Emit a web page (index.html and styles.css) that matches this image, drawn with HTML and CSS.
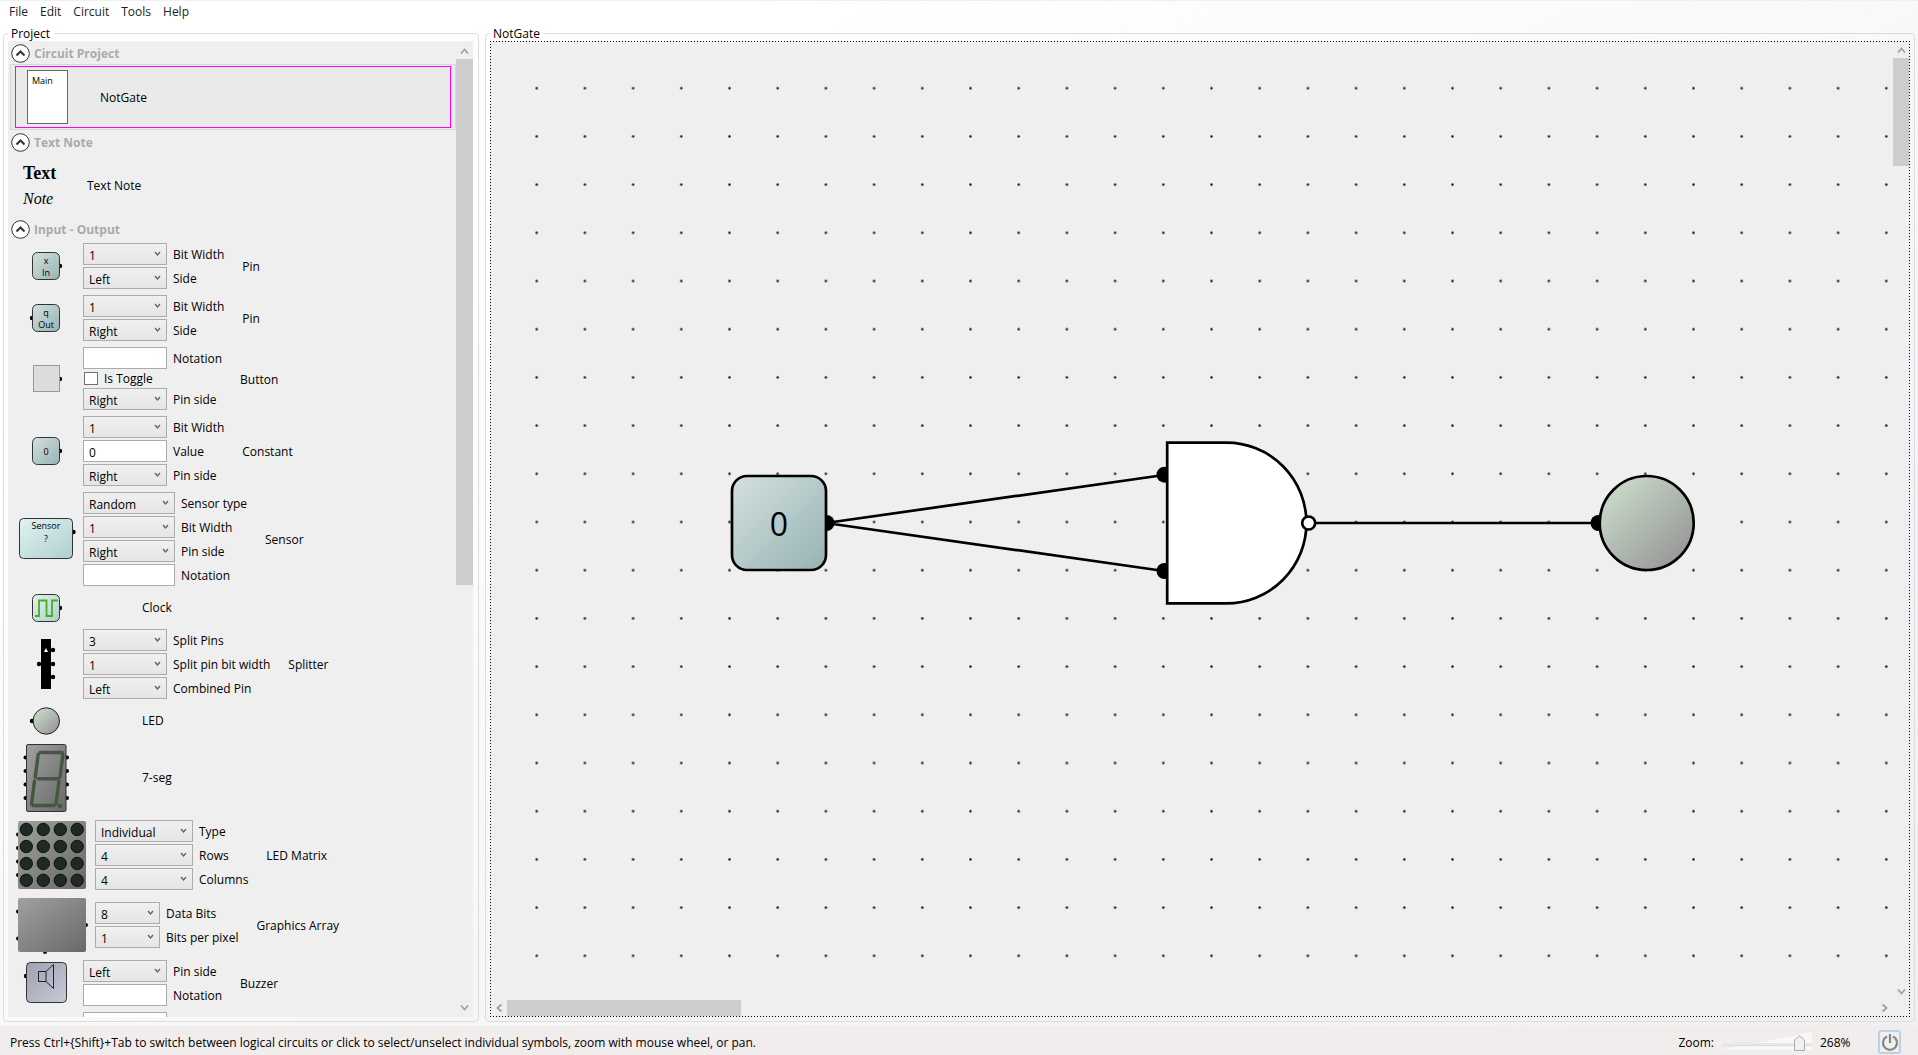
FILE: index.html
```html
<!DOCTYPE html>
<html lang="en">
<head>
<meta charset="utf-8">
<title>NotGate</title>
<link rel="stylesheet" href="styles.css">
</head>
<body>
<svg class="defs" width="0" height="0" aria-hidden="true">
  <defs>
    <linearGradient id="teal" x1="0" y1="0" x2="1" y2="1"><stop offset="0" stop-color="#d3e0de"/><stop offset="1" stop-color="#97b3b4"/></linearGradient>
    <linearGradient id="aqua" x1="0" y1="0" x2="1" y2="1"><stop offset="0" stop-color="#e2f2f1"/><stop offset="1" stop-color="#aecfcf"/></linearGradient>
    <linearGradient id="led" x1="0" y1="0" x2="1" y2="1"><stop offset="0.1" stop-color="#cadbca"/><stop offset="0.9" stop-color="#969696"/></linearGradient>
    <linearGradient id="gray" x1="0" y1="0" x2="1" y2="1"><stop offset="0" stop-color="#a0a0a0"/><stop offset="1" stop-color="#696969"/></linearGradient>
    <linearGradient id="violet" x1="0" y1="0" x2="1" y2="1"><stop offset="0" stop-color="#9f9fb0"/><stop offset="1" stop-color="#c9cbd8"/></linearGradient>
    <pattern id="grid" x="21.6" y="22.1" width="48.2" height="48.2" patternUnits="userSpaceOnUse"><circle cx="24.1" cy="24.1" r="1.2" fill="#111"/></pattern>
    <path id="chevron" d="M-4 2.5 0 -1.5 4 2.5" fill="none" stroke="#333" stroke-width="2"/>
    <path id="arrow" d="M-3.500 2.500 0 -1.500 3.500 2.500" fill="none" stroke="#a0a0a0" stroke-width="1.800"/>
  </defs>
</svg>

<nav class="menu">
  <button type="button">File</button>
  <button type="button">Edit</button>
  <button type="button">Circuit</button>
  <button type="button">Tools</button>
  <button type="button">Help</button>
</nav>

<main class="work">
  <fieldset class="group project">
    <legend>Project</legend>
    <div class="list">
      <section class="set">
        <h2><button type="button" aria-label="Collapse Circuit Project"><svg width="19" height="19"><circle cx="9.5" cy="9.5" r="8.8" fill="#fff" stroke="#333"/><use href="#chevron" x="9.5" y="9"/></svg></button>Circuit Project</h2>
        <div class="current"><div class="current-frame">
          <div class="sheet">Main</div>
          <span class="caption">NotGate</span>
        </div></div>
      </section>

      <section class="set">
        <h2><button type="button" aria-label="Collapse Text Note"><svg width="19" height="19"><circle cx="9.5" cy="9.5" r="8.8" fill="#fff" stroke="#333"/><use href="#chevron" x="9.5" y="9"/></svg></button>Text Note</h2>
        <div class="item note">
          <div class="sample"><b>Text</b><i>Note</i></div>
          <span class="caption">Text Note</span>
        </div>
      </section>

      <section class="set">
        <h2><button type="button" aria-label="Collapse Input - Output"><svg width="19" height="19"><circle cx="9.5" cy="9.5" r="8.8" fill="#fff" stroke="#333"/><use href="#chevron" x="9.5" y="9"/></svg></button>Input - Output</h2>

        <div class="item">
          <svg class="icon" width="73" height="28"><circle cx="50" cy="14" r="2.2"/><rect x="22.5" y=".5" width="27" height="27" rx="5" fill="url(#teal)" stroke="#333"/><text x="36" y="12">x</text><text x="36" y="24">In</text></svg>
          <div class="fields">
            <label><select><option>1</option></select>Bit Width</label>
            <label><select><option>Left</option></select>Side</label>
          </div>
          <span class="name">Pin</span>
        </div>

        <div class="item">
          <svg class="icon" width="73" height="28"><circle cx="22" cy="14" r="2.2"/><rect x="22.5" y=".5" width="27" height="27" rx="5" fill="url(#teal)" stroke="#333"/><text x="36" y="12">q</text><text x="36" y="24">Out</text></svg>
          <div class="fields">
            <label><select><option>1</option></select>Bit Width</label>
            <label><select><option>Right</option></select>Side</label>
          </div>
          <span class="name">Pin</span>
        </div>

        <div class="item">
          <svg class="icon" width="73" height="28"><circle cx="50" cy="14" r="2.2"/><rect x="23.5" y=".5" width="26" height="26" fill="#dcdcdc" stroke="#999"/></svg>
          <div class="fields toggle">
            <label><input type="text">Notation</label>
            <label class="check"><input type="checkbox">Is Toggle</label>
            <label><select><option>Right</option></select>Pin side</label>
          </div>
          <span class="name">Button</span>
        </div>

        <div class="item">
          <svg class="icon" width="73" height="28"><circle cx="50" cy="14" r="2.2"/><rect x="22.5" y=".5" width="27" height="27" rx="5" fill="url(#teal)" stroke="#333"/><text x="36" y="18">0</text></svg>
          <div class="fields">
            <label><select><option>1</option></select>Bit Width</label>
            <label><input type="text" value="0">Value</label>
            <label><select><option>Right</option></select>Pin side</label>
          </div>
          <span class="name">Constant</span>
        </div>

        <div class="item">
          <svg class="icon" width="73" height="42"><circle cx="63.5" cy="14" r="2.2"/><rect x="9.5" y=".5" width="53" height="40" rx="4" fill="url(#aqua)" stroke="#333"/><text x="36" y="11">Sensor</text><text x="36" y="24">?</text></svg>
          <div class="fields wide">
            <label><select><option>Random</option></select>Sensor type</label>
            <label><select><option>1</option></select>Bit Width</label>
            <label><select><option>Right</option></select>Pin side</label>
            <label><input type="text">Notation</label>
          </div>
          <span class="name">Sensor</span>
        </div>

        <div class="item plain">
          <svg class="icon" width="73" height="28"><circle cx="50" cy="14" r="2.2"/><rect x="22.5" y=".5" width="27" height="27" rx="5" fill="url(#aqua)" stroke="#333"/><path d="M25 22h4V6.500h7.500V22h5.500V6.500h6" fill="none" stroke="#4dac1c" stroke-width="1.800"/></svg>
          <span>Clock</span>
        </div>

        <div class="item">
          <svg class="icon" width="73" height="50"><rect x="31" width="10" height="50"/><circle cx="43" cy="11" r="2.200"/><circle cx="43" cy="25" r="2.200"/><circle cx="43" cy="38" r="2.200"/><circle cx="29" cy="25" r="2.200"/><path d="M36 9l2 4h-4z" fill="#fff"/></svg>
          <div class="fields">
            <label><select><option>3</option></select>Split Pins</label>
            <label><select><option>1</option></select>Split pin bit width</label>
            <label><select><option>Left</option></select>Combined Pin</label>
          </div>
          <span class="name">Splitter</span>
        </div>

        <div class="item plain">
          <svg class="icon" width="73" height="28"><circle cx="22" cy="14" r="2.200"/><circle cx="36.300" cy="14" r="13.200" fill="url(#led)" stroke="#222"/></svg>
          <span>LED</span>
        </div>

        <div class="item plain tall">
          <svg class="icon" width="73" height="68">
            <g><circle cx="15.500" cy="13.500" r="2"/><circle cx="15.500" cy="27" r="2"/><circle cx="15.500" cy="40.500" r="2"/><circle cx="15.500" cy="54" r="2"/><circle cx="57" cy="13.500" r="2"/><circle cx="57" cy="27" r="2"/><circle cx="57" cy="40.500" r="2"/><circle cx="57" cy="54" r="2"/></g>
            <rect x="16.500" y=".5" width="39.500" height="67" rx="1.500" fill="url(#gray)" stroke="#333"/>
            <path d="M30 8.500h22M28.200 10.500 25.200 33M53 10.500 50 33M28 34.800h20M24.500 37 21.500 60M49 37 46 60M23 61.500h21" stroke="#43583f" stroke-width="3.400" stroke-linecap="round"/><circle cx="50" cy="62" r="2.300" fill="#43583f"/>
          </svg>
          <span>7-seg</span>
        </div>

        <div class="item">
          <svg class="icon" width="85" height="68">
            <g><circle cx="8" cy="13.500" r="2"/><circle cx="8" cy="27" r="2"/><circle cx="8" cy="40.500" r="2"/><circle cx="8" cy="54" r="2"/></g>
            <rect x="8" width="68" height="68" rx="2" fill="url(#gray)"/>
            <g fill="#1f2b1f" stroke="#111"><circle cx="16.300" cy="8.500" r="6.200"/><circle cx="33.300" cy="8.500" r="6.200"/><circle cx="50.300" cy="8.500" r="6.200"/><circle cx="67.200" cy="8.500" r="6.200"/><circle cx="16.300" cy="25.500" r="6.200"/><circle cx="33.300" cy="25.500" r="6.200"/><circle cx="50.300" cy="25.500" r="6.200"/><circle cx="67.200" cy="25.500" r="6.200"/><circle cx="16.300" cy="42.500" r="6.200"/><circle cx="33.300" cy="42.500" r="6.200"/><circle cx="50.300" cy="42.500" r="6.200"/><circle cx="67.200" cy="42.500" r="6.200"/><circle cx="16.300" cy="59.300" r="6.200"/><circle cx="33.300" cy="59.300" r="6.200"/><circle cx="50.300" cy="59.300" r="6.200"/><circle cx="67.200" cy="59.300" r="6.200"/></g>
          </svg>
          <div class="fields matrix">
            <label><select><option>Individual</option></select>Type</label>
            <label><select><option>4</option></select>Rows</label>
            <label><select><option>4</option></select>Columns</label>
          </div>
          <span class="name">LED Matrix</span>
        </div>

        <div class="item array">
          <svg class="icon" width="85" height="54"><circle cx="8" cy="13.500" r="2"/><circle cx="8" cy="40.500" r="2"/><circle cx="76" cy="27" r="2"/><circle cx="35" cy="54" r="2"/><rect x="8" width="68" height="54" rx="2" fill="url(#gray)"/></svg>
          <div class="fields small">
            <label><select><option>8</option></select>Data Bits</label>
            <label><select><option>1</option></select>Bits per pixel</label>
          </div>
          <span class="name">Graphics Array</span>
        </div>

        <div class="item">
          <svg class="icon" width="73" height="42"><circle cx="16" cy="14" r="2.200"/><rect x="16.500" y=".5" width="40" height="40" rx="4" fill="url(#violet)" stroke="#333"/><path d="M28.500 9.500h7.500v10h-7.500zM36 9.500l7.500-7v24l-7.500-7" fill="none" stroke="#222"/></svg>
          <div class="fields">
            <label><select><option>Left</option></select>Pin side</label>
            <label><input type="text">Notation</label>
          </div>
          <span class="name">Buzzer</span>
        </div>

        <div class="item">
          <svg class="icon" width="73" height="22"></svg>
          <div class="fields"><label><input type="text"></label></div>
        </div>
      </section>
    </div>
    <div class="vbar">
      <svg width="17" height="18"><use href="#arrow" x="8.500" y="10"/></svg>
      <div class="track"><div class="thumb"></div></div>
      <svg width="17" height="18"><use href="#arrow" transform="translate(8.500 9) scale(1 -1)"/></svg>
    </div>
  </fieldset>

  <fieldset class="group editor">
    <legend>NotGate</legend>
    <div class="diagram">
      <svg class="sheet-view" width="100%" height="100%">
        <rect width="100%" height="100%" fill="url(#grid)"/>
        <g stroke="#000" stroke-width="2.700">
          <path d="M335 481 673 433M335 481 673 529M817 481H1107" fill="none"/>
          <g stroke="none"><circle cx="335.500" cy="481" r="8"/><circle cx="673.500" cy="432.700" r="8"/><circle cx="673.500" cy="529" r="8"/><circle cx="1107.500" cy="481" r="8"/></g>
          <rect x="241" y="434" width="94" height="94" rx="15" fill="url(#teal)"/>
          <path d="M676.200 400.700H735.500A80 80.300 0 0 1 735.500 561.300H676.200Z" fill="#fff"/>
          <circle cx="817.700" cy="481" r="6.500" fill="#fff"/>
          <circle cx="1155.700" cy="481" r="47" fill="url(#led)"/>
        </g>
        <text class="value" x="288" y="494">0</text>
      </svg>
      <div class="vbar">
        <svg width="17" height="16"><use href="#arrow" x="8.500" y="8"/></svg>
        <div class="track"><div class="thumb"></div></div>
        <svg width="17" height="16"><use href="#arrow" transform="translate(8.500 8) scale(1 -1)"/></svg>
      </div>
      <div class="hbar">
        <svg width="16" height="16"><use href="#arrow" transform="translate(8 8) rotate(-90)"/></svg>
        <div class="track"><div class="thumb"></div></div>
        <svg width="16" height="16"><use href="#arrow" transform="translate(8 8) rotate(90)"/></svg>
      </div>
    </div>
  </fieldset>
</main>

<footer class="status">
  <span class="hint">Press Ctrl+{Shift}+Tab to switch between logical circuits or click to select/unselect individual symbols, zoom with mouse wheel, or pan.</span>
  <label for="zoom">Zoom:</label>
  <input id="zoom" type="range" min="0" max="100" value="92">
  <output for="zoom">268%</output>
  <button type="button" class="power" aria-label="Power"><svg width="18" height="18"><path d="M6 3.500a7 7 0 1 0 6 0M9 1v9" fill="none" stroke="#888" stroke-width="2.200"/></svg></button>
</footer>
</body>
</html>
```
FILE: styles.css
```css
* { box-sizing: border-box; }

body {
  margin: 0;
  height: 100vh;
  display: flex;
  flex-direction: column;
  overflow: hidden;
  border-top: 1px solid #f0f0f0;
  background: linear-gradient(to bottom right, #fff 0%, #fff 20%, #f3f3f5 75%, #f0f0f0 100%);
  font: 12px/16px "Open Sans", "Noto Sans", sans-serif;
  color: #000;
}

button, input, select { font: inherit; color: inherit; }
.defs { position: absolute; }

.menu {
  display: flex;
  flex: none;
  height: 24px;
  padding: 0 3px 2px;
  align-items: center;
}
.menu button {
  border: 0;
  padding: 0 6px;
  background: none;
  color: #222;
}

.work {
  flex: 1;
  min-height: 0;
  display: flex;
  gap: 6px;
  padding: 0 3px 4px;
}

.group {
  display: flex;
  min-width: 0;
  margin: 0;
  padding: 0 4px 4px;
  border: 1px solid #d5dfe5;
  border-radius: 4px;
}
.group legend {
  height: 16px;
  padding: 0 4px 0 3px;
  line-height: 18px;
}
.project {
  flex: 0 0 476px;
  padding-right: 5px;
}
.editor { flex: 1; }

.list {
  flex: 1;
  min-width: 0;
  overflow: hidden;
  padding: 2px 0 0 2px;
  background: #efefef;
}
.set { margin-bottom: 2px; }
.set h2 {
  display: flex;
  align-items: center;
  gap: 4px;
  height: 21px;
  margin: 0;
  font-size: 12px;
  font-weight: 700;
  color: #aaa;
}
.set h2 button {
  display: flex;
  margin: 0 0 0 1px;
  padding: 0;
  border: 0;
  background: none;
}

.current {
  height: 66px;
  padding: 1px 4px;
  border: 1px solid #d9d9d9;
  background: #eaeaea;
}
.current-frame {
  display: flex;
  align-items: center;
  gap: 32px;
  height: 62px;
  padding-left: 11px;
  border: 1px solid #f0f;
}
.sheet {
  width: 41px;
  height: 54px;
  padding: 2px 4px;
  border: 1px solid #666;
  background: #fff;
  font-size: 9px;
}

.item {
  display: flex;
  align-items: center;
  padding: 3px 0;
}
.icon {
  flex: none;
  overflow: visible;
}
.icon text {
  font-size: 9px;
  text-anchor: middle;
}
.name, .caption { padding-top: 2px; }
.name { margin-left: 18px; }
.plain { height: 37px; gap: 59px; }
.tall { height: 78px; }
.array { height: 64px; }

.note { height: 64px; }
.sample {
  display: flex;
  flex-direction: column;
  gap: 6px;
  width: 77px;
  padding: 2px 0 0 13px;
  font-family: "Liberation Serif", serif;
}
.sample b { font-size: 18px; line-height: 20px; }
.sample i { font-size: 16px; line-height: 20px; }

.fields {
  --box: 84px;
  display: flex;
  flex-direction: column;
  gap: 2px;
}
.wide { --box: 92px; }
.matrix { --box: 98px; }
.small { --box: 65px; }
.toggle { gap: 3px; }
.fields label {
  display: flex;
  align-items: flex-end;
  gap: 6px;
  line-height: 20px;
}
.fields select,
.fields input[type="text"] {
  width: var(--box);
  height: 22px;
  margin: 0;
  border: 1px solid #acacac;
  border-radius: 0;
}
.fields input[type="text"] {
  padding: 2px 5px 0;
  background: #fff;
}
.fields select {
  appearance: none;
  padding: 2px 16px 0 5px;
  background:
    url("data:image/svg+xml,%3Csvg xmlns='http://www.w3.org/2000/svg' width='7' height='6'%3E%3Cpath d='M1 1l2.500 3L6 1' fill='none' stroke='%23606060' stroke-width='1.300'/%3E%3C/svg%3E") right 5px top 7px no-repeat,
    linear-gradient(#f0f0f0, #e5e5e5);
}
.fields .check {
  align-items: center;
  height: 13px;
}
.check input {
  appearance: none;
  width: 14px;
  height: 13px;
  margin: 0 0 0 1px;
  border: 1px solid #707070;
  background: #fff;
}

.vbar {
  display: flex;
  flex-direction: column;
  flex: none;
  width: 17px;
}
.project .vbar { background: #efefef; }
.hbar { display: flex; }
.vbar svg, .hbar svg { flex: none; display: block; }
.track { flex: 1; }
.thumb { background: #cdcdcd; }
.project .thumb { height: 56%; }

.diagram {
  flex: 1;
  min-width: 0;
  display: grid;
  grid-template: minmax(0, 1fr) 16px / minmax(0, 1fr) 17px;
  padding: 1px 0 1px 1px;
  background:
    repeating-linear-gradient(to right, #000 0 1px, transparent 1px 3px) top / 100% 1px no-repeat,
    repeating-linear-gradient(to right, #000 0 1px, transparent 1px 3px) bottom / 100% 1px no-repeat,
    repeating-linear-gradient(#000 0 1px, transparent 1px 3px) left / 1px 100% no-repeat,
    repeating-linear-gradient(#000 0 1px, transparent 1px 3px) right / 1px 100% no-repeat,
    #efefef;
}
.sheet-view { display: block; }
.value { font-size: 32px; text-anchor: middle; }
.diagram .vbar .thumb { height: 11.7%; margin-right: 1px; }
.diagram .hbar .thumb { width: 17.1%; height: 16px; }

.status {
  flex: none;
  display: flex;
  align-items: center;
  height: 29px;
  padding: 2px 17px 0 10px;
  background: #f0edec;
}
.hint { flex: 1; }
.hint, .status label, .status output { padding-top: 2px; }
.status input {
  appearance: none;
  width: 94px;
  height: 22px;
  margin: 0 8px 0 4px;
  background:
    linear-gradient(#dcdcdc, #dcdcdc) 4px 14px / 88px 1px no-repeat,
    linear-gradient(#e6eaea, #e6eaea) 4px 12px / 90px 3px no-repeat,
    linear-gradient(to bottom right, transparent 50%, #f7f7f7 51%) 0 1px / 94px 18px no-repeat;
}
.status input::-webkit-slider-thumb {
  appearance: none;
  width: 11px;
  height: 16px;
  margin-top: 2px;
  background: url("data:image/svg+xml,%3Csvg xmlns='http://www.w3.org/2000/svg' width='11' height='16'%3E%3Cpath d='M.5 15.500V5L5.500 .8 10.500 5v10.500z' fill='%23f0f0f0' stroke='%23acacac'/%3E%3C/svg%3E") no-repeat;
}
.status output { width: 58px; }
.power {
  display: flex;
  align-items: center;
  justify-content: center;
  width: 23px;
  height: 24px;
  padding: 0;
  border: 2px solid #b9d1ea;
  border-radius: 3px;
  background: #f0f0f0;
}
```
